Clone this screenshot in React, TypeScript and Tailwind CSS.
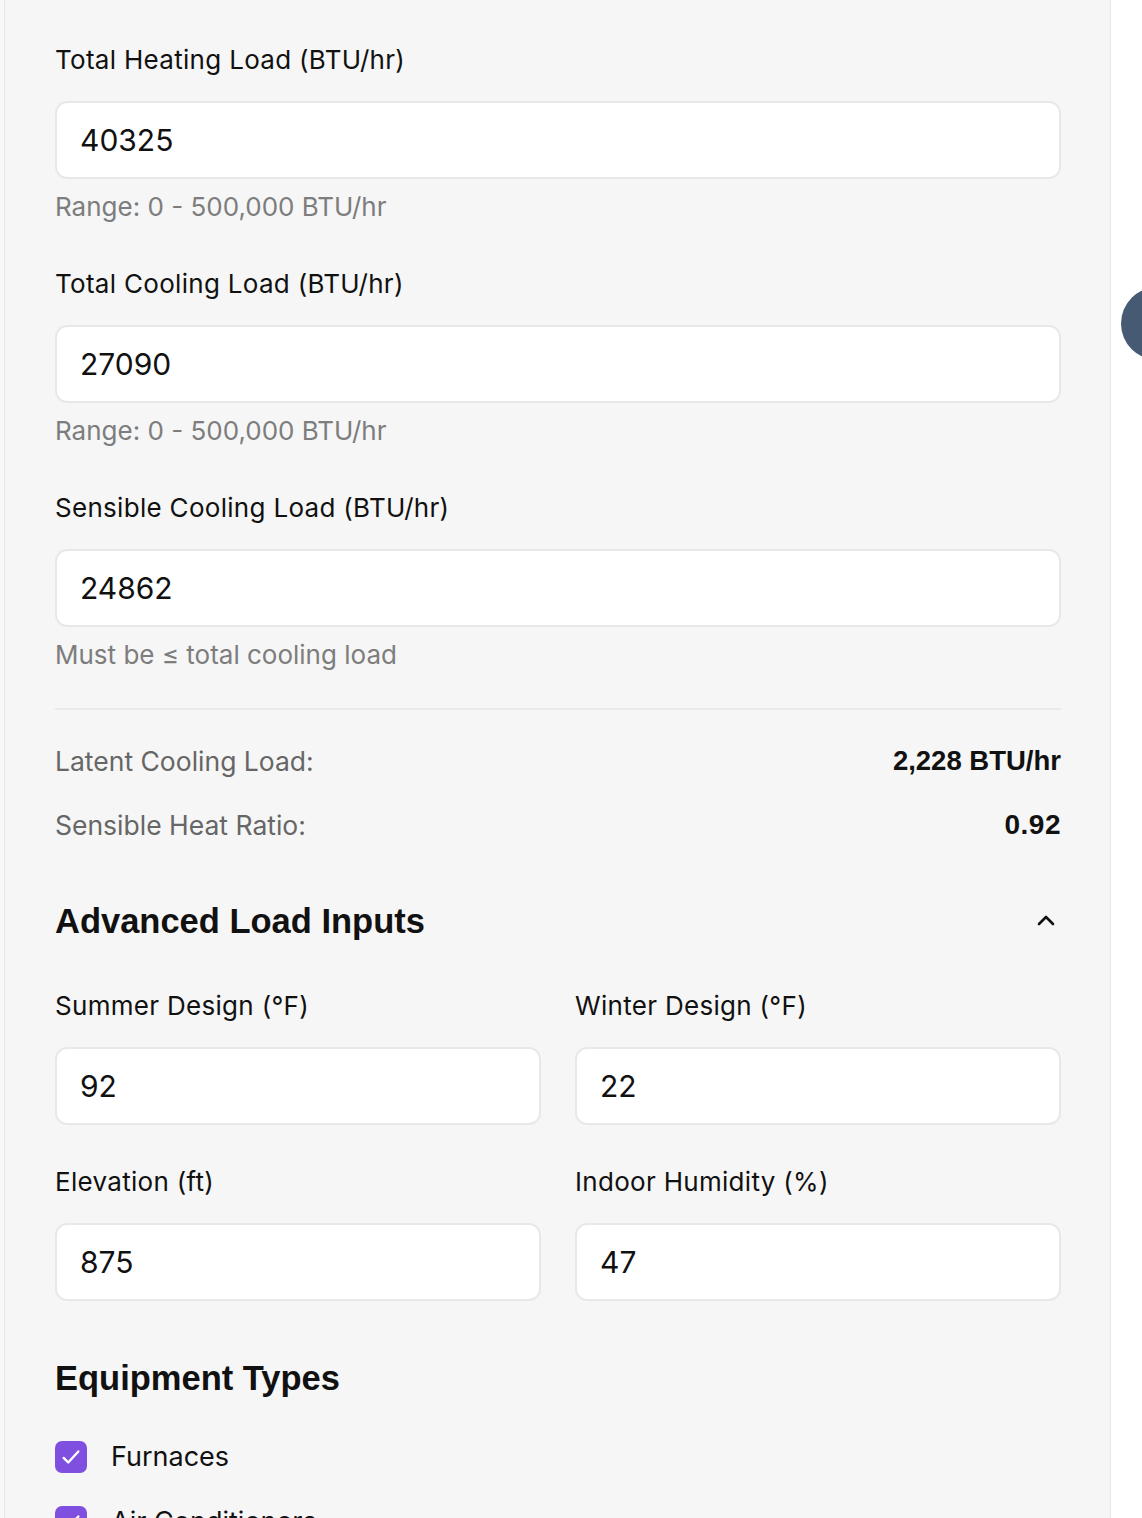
import React from "react";

const labelCls = "text-[26px] leading-[32px] text-[#111111] tracking-[0.3px]";
const helpCls = "text-[26px] leading-[32px] text-[#7d7d7d]";
const inputCls =
  "h-[78px] w-full rounded-[12px] border-2 border-[#e8e8e8] bg-white px-[23px] text-[30px] text-[#111111] outline-none";
const boldFont = { fontFamily: "'Liberation Sans', Arial, sans-serif" };

function Field({ label, value, help, mt }: { label: string; value: string; help?: string; mt: string }) {
  return (
    <div className={mt}>
      <div className={labelCls}>{label}</div>
      <input className={inputCls + " mt-[25px]"} defaultValue={value} readOnly />
      {help && <div className={helpCls + " mt-[12px]"}>{help}</div>}
    </div>
  );
}

export default function App() {
  return (
    <div
      className="flex h-[1518px] overflow-hidden bg-white"
      style={{ fontFamily: "Inter, 'Liberation Sans', sans-serif" }}
    >
      <div className="w-[4px] shrink-0 bg-[#f8f8f8]" />
      <div className="w-[1107px] shrink-0 border-x border-[#e6e6e6] bg-[#f6f6f6] pl-[50px] pr-[49px] pt-[44px]">
        <Field label="Total Heating Load (BTU/hr)" value="40325" help="Range: 0 - 500,000 BTU/hr" mt="" />
        <Field label="Total Cooling Load (BTU/hr)" value="27090" help="Range: 0 - 500,000 BTU/hr" mt="mt-[45px]" />
        <Field label="Sensible Cooling Load (BTU/hr)" value="24862" help="Must be ≤ total cooling load" mt="mt-[45px]" />
        <div className="mt-[37px] h-[2px] bg-[#e9e9e9]" />
        <div className="mt-[35px] flex items-center justify-between">
          <span className="text-[26.5px] leading-[32px] text-[#666666]">Latent Cooling Load:</span>
          <span className="text-[27.5px] leading-[32px] font-bold text-[#111111]" style={boldFont}>
            2,228 BTU/hr
          </span>
        </div>
        <div className="mt-[32px] flex items-center justify-between">
          <span className="text-[26.5px] leading-[32px] text-[#666666]">Sensible Heat Ratio:</span>
          <span className="text-[28px] leading-[32px] font-bold text-[#111111] tracking-[0.5px]" style={boldFont}>
            0.92
          </span>
        </div>
        <div className="mt-[60px] flex items-center justify-between">
          <h2 className="text-[34.5px] leading-[40px] font-bold text-[#111111]" style={boldFont}>
            Advanced Load Inputs
          </h2>
          <svg width="24" height="24" viewBox="0 0 24 24" className="mr-[3px]" fill="none" stroke="#111111" strokeWidth="2.6" strokeLinecap="round" strokeLinejoin="round">
            <path d="M5 15l7-7 7 7" />
          </svg>
        </div>
        <div className="mt-[49px] grid grid-cols-2 gap-x-[34px]">
          <Field label="Summer Design (°F)" value="92" mt="" />
          <Field label="Winter Design (°F)" value="22" mt="" />
          <Field label="Elevation (ft)" value="875" mt="mt-[41px]" />
          <Field label="Indoor Humidity (%)" value="47" mt="mt-[41px]" />
        </div>
        <h2 className="mt-[57px] text-[34.5px] leading-[40px] font-bold text-[#111111]" style={boldFont}>
          Equipment Types
        </h2>
        <div className="mt-[43px] flex flex-col gap-[33px]">
          {["Furnaces", "Air Conditioners"].map((t) => (
            <div key={t} className="flex items-center gap-[24px]">
              <span className="flex h-[32px] w-[32px] items-center justify-center rounded-[7px] bg-[#7f4fe0]">
                <svg width="22" height="22" viewBox="0 0 24 24" fill="none" stroke="white" strokeWidth="2.6" strokeLinecap="round" strokeLinejoin="round">
                  <path d="M4 13l5 5L20 6" />
                </svg>
              </span>
              <span className="text-[27px] leading-[32px] text-[#111111]">{t}</span>
            </div>
          ))}
        </div>
      </div>
      <div className="relative flex-1">
        <div className="absolute left-[10px] top-[287px] h-[73px] w-[73px] rounded-full bg-[#475a74]" />
      </div>
    </div>
  );
}
